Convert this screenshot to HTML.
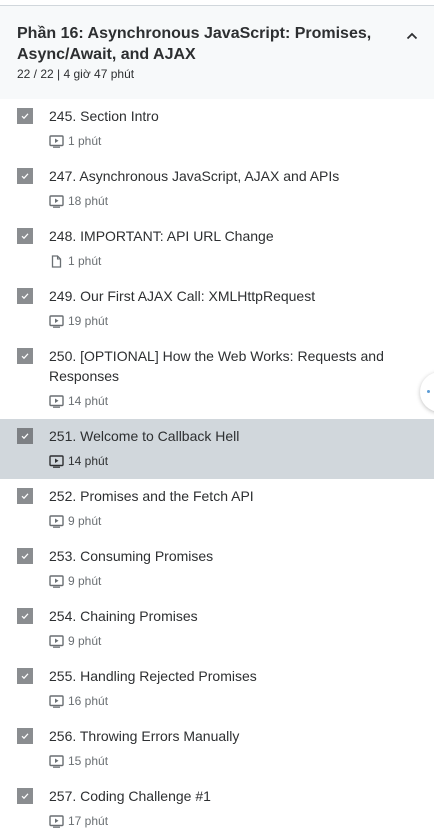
<!DOCTYPE html>
<html><head><meta charset="utf-8"><style>
*{margin:0;padding:0;box-sizing:border-box}
body{width:434px;height:830px;overflow:hidden;background:#fff;font-family:"Liberation Sans",Arial,sans-serif;color:#2d2f31;position:relative}
.top{height:6px;border-bottom:1px solid #d1d7dc;background:#fff}
.hdr{background:#f7f9fa;height:93px;padding:17px 50px 0 17px;position:relative}
.hdr h2{font-size:16px;font-weight:bold;line-height:21px;color:#2d2f31}
.hdr .s{font-size:12px;color:#2d2f31;margin-top:2px}
.car{position:absolute;right:16px;top:26px;width:12px;height:8px}
.it{position:relative;padding:7px 10px 0 49px;height:60px}
.it.two{height:80px}
.it.hl{background:#d1d7dc}
.cb{position:absolute;left:17px;top:9px;width:16px;height:16px;background:#8a8d90;}
.it.hl .cb{background:#7d8084}
.cb svg{position:absolute;left:3px;top:3px}
.t{font-size:14px;line-height:20px}
.m{font-size:12px;color:#6a6f73;margin-top:8px;display:flex;align-items:center;gap:4px}
.it.hl .m{color:#2d2f31}
.fab{position:absolute;left:420px;top:372px;width:40px;height:40px;border-radius:50%;background:#fff;box-shadow:0 1px 4px rgba(0,0,0,.25)}
.fab i{position:absolute;left:7px;top:18px;width:3px;height:3px;border-radius:50%;background:#5b9bd5}
</style></head><body>
<div class="top"></div>
<div class="hdr"><h2>Phần 16: Asynchronous JavaScript: Promises, Async/Await, and AJAX</h2><div class="s">22 / 22 | 4 giờ 47 phút</div>
<svg class="car" viewBox="0 0 12 8"><path d="M1.5 6.5L6 2l4.5 4.5" fill="none" stroke="#2d2f31" stroke-width="1.8"/></svg></div>
<div id="list"></div>
<div class="fab"><i></i></div>
<script>
const items=[["245. Section Intro","1 phút",0],["247. Asynchronous JavaScript, AJAX and APIs","18 phút",0],["248. IMPORTANT: API URL Change","1 phút",1],["249. Our First AJAX Call: XMLHttpRequest","19 phút",0],["250. [OPTIONAL] How the Web Works: Requests and Responses","14 phút",0,1],["251. Welcome to Callback Hell","14 phút",0,0,1],["252. Promises and the Fetch API","9 phút",0],["253. Consuming Promises","9 phút",0],["254. Chaining Promises","9 phút",0],["255. Handling Rejected Promises","16 phút",0],["256. Throwing Errors Manually","15 phút",0],["257. Coding Challenge #1","17 phút",0]];
const vid='<svg width="15" height="13" viewBox="0 0 15 13"><rect x="1" y="1" width="13" height="9.5" rx="1" fill="none" stroke="currentColor" stroke-width="1.4"/><path d="M6 3.5v4.5l3.5-2.25z" fill="currentColor"/><path d="M4 12.2h7" stroke="currentColor" stroke-width="1.2"/></svg>';
const doc='<svg width="15" height="13" viewBox="0 0 15 13"><path d="M3.5 1h5l3 3v8h-8z" fill="none" stroke="currentColor" stroke-width="1.3"/><path d="M8.5 1v3h3" fill="none" stroke="currentColor" stroke-width="1.1"/></svg>';
let h='';
for(const [t,m,d,two,hl] of items){h+=`<div class="it${two?' two':''}${hl?' hl':''}"><div class="cb"><svg width="10" height="10" viewBox="0 0 10 10"><path d="M2 5.2l2 2 4-4.4" fill="none" stroke="#fff" stroke-width="1.2"/></svg></div><div class="t">${t}</div><div class="m">${d?doc:vid}<span>${m}</span></div></div>`}
document.getElementById('list').innerHTML=h;
</script>
</body></html>
